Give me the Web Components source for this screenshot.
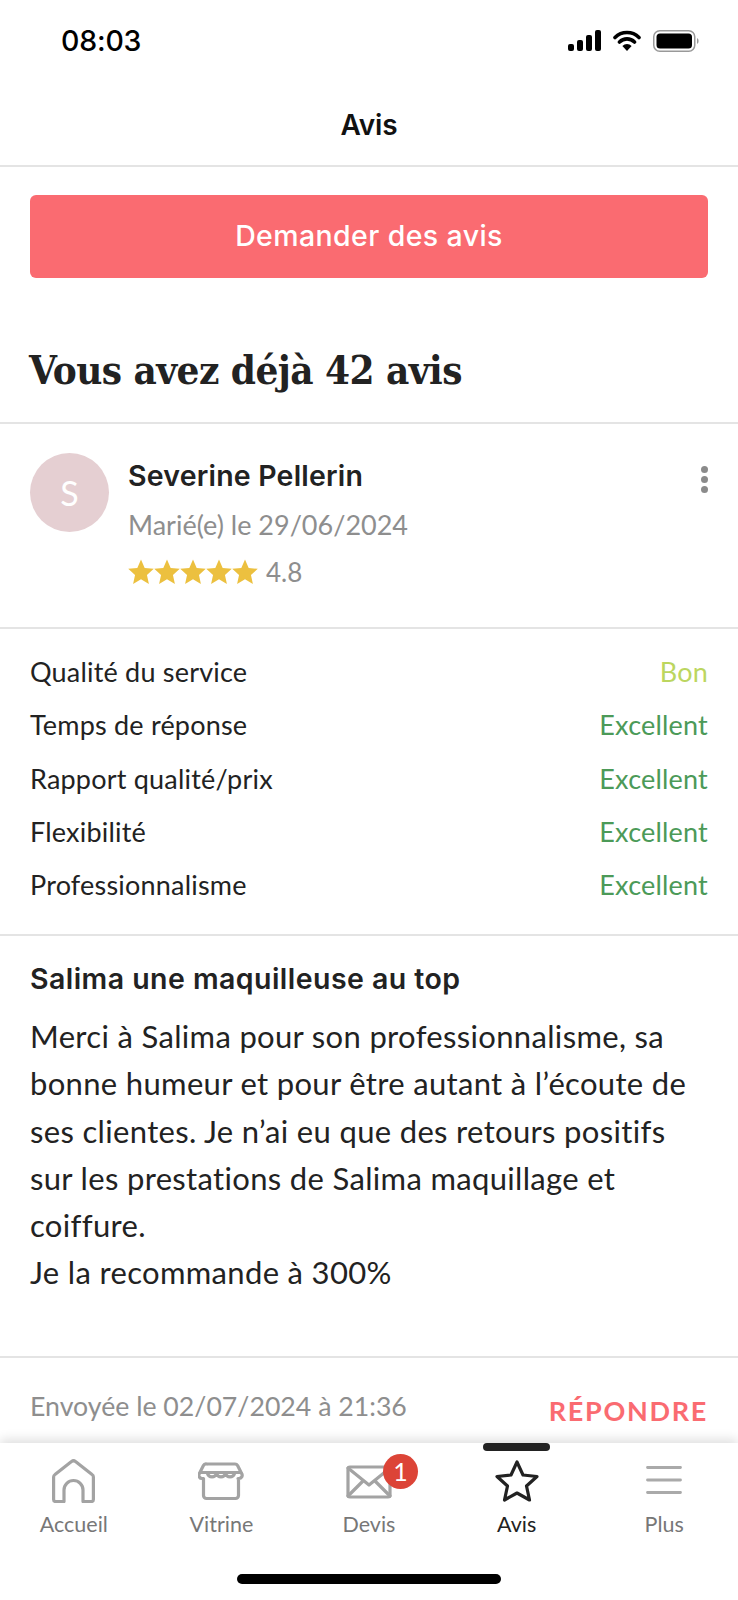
<!DOCTYPE html>
<html lang="fr">
<head>
<meta charset="utf-8">
<title>Avis</title>
<style>
    html, body { margin: 0; background: #fff; }
    body { font-family: Lato, "Open Sans", sans-serif; color: #222; }
</style>
</head>
<body>
<app-screen>
    <status-bar slot="top"></status-bar>
    <nav-title slot="top">Avis</nav-title>
    <request-button>Demander des avis</request-button>
    <count-heading>Vous avez déjà 42 avis</count-heading>
    <review-head name="Severine Pellerin" initial="S" date="Marié(e) le 29/06/2024" score="4.8"></review-head>
    <score-list>
        <score-row label="Qualité du service" value="Bon" tone="#bcd65f"></score-row>
        <score-row label="Temps de réponse" value="Excellent"></score-row>
        <score-row label="Rapport qualité/prix" value="Excellent"></score-row>
        <score-row label="Flexibilité" value="Excellent"></score-row>
        <score-row label="Professionnalisme" value="Excellent"></score-row>
    </score-list>
    <review-body heading="Salima une maquilleuse au top">Merci à Salima pour son professionnalisme, sa<br>bonne humeur et pour être autant à l’écoute de<br>ses clientes. Je n’ai eu que des retours positifs<br>sur les prestations de Salima maquillage et<br>coiffure.<br>Je la recommande à 300%</review-body>
    <review-foot date="Envoyée le 02/07/2024 à 21:36" action="RÉPONDRE"></review-foot>
    <tab-bar slot="bottom"></tab-bar>
</app-screen>

<script>
function define (name, html) {
    const template = document.createElement('template')
    template.innerHTML = html
    customElements.define(name, class extends HTMLElement {
        constructor () {
            super()
            this.attachShadow({ mode: 'open' }).appendChild(template.content.cloneNode(true))
            this.shadowRoot.querySelectorAll('[data-attr]').forEach(el => {
                el.textContent = this.getAttribute(el.dataset.attr)
            })
        }
    })
}

define('app-screen', `
    <style>
        :host { display: flex; flex-direction: column; height: 1600px; overflow: hidden; background: #fff; }
        main { flex: 1; min-height: 0; overflow: hidden; }
    </style>
    <slot name="top"></slot>
    <main><slot></slot></main>
    <slot name="bottom"></slot>
`)

define('status-bar', `
    <style>
        :host { display: flex; justify-content: space-between; align-items: center; height: 81px; padding: 0 39px 0 61px; box-sizing: border-box; }
        span { font: 500 28.500px/1 Inter, sans-serif; letter-spacing: -.2px; color: #000; margin-top: 2px; }
        div { display: flex; gap: 12px; align-items: center; }
    </style>
    <span>08:03</span>
    <div>
        <svg width="33" height="21" viewBox="0 0 33 21"><rect x="0" y="14" width="6" height="7" rx="2"/><rect x="9" y="10" width="6" height="11" rx="2"/><rect x="18" y="5" width="6" height="16" rx="2"/><rect x="27" y="0" width="6" height="21" rx="2"/></svg>
        <svg width="28" height="21" viewBox="0 0 28 21"><path d="M2 7.500a17 17 0 0 1 24 0M6.500 12a10.600 10.600 0 0 1 15 0" fill="none" stroke="#000" stroke-width="3.600" stroke-linecap="round"/><path d="M14 21l-4.600-5a6.400 6.400 0 0 1 9.200 0z"/></svg>
        <svg width="46" height="22" viewBox="0 0 46 22"><rect x=".75" y=".75" width="41" height="20.500" rx="6" fill="none" stroke="#999" stroke-width="1.500"/><rect x="3.500" y="3.500" width="35.500" height="15" rx="3.500"/><path d="M44 8v6a3 3 0 0 0 1.600-3 3 3 0 0 0-1.600-3z" fill="#999"/></svg>
    </div>
`)

define('nav-title', `
    <style>
        :host { display: block; height: 86px; text-align: center; font: 600 28px/88px Inter, sans-serif; letter-spacing: -.2px; color: #111; border-bottom: 2px solid #e4e4e4; box-sizing: border-box; }
    </style>
    <slot></slot>
`)

define('request-button', `
    <style>
        :host { display: block; padding: 28px 30px 0; }
        button { display: block; width: 100%; height: 83px; border: 0; border-radius: 6px; background: #fa6b71; color: #fff; font: 500 28.500px/81px Inter, sans-serif; letter-spacing: .4px; padding: 0 0 2px; }
    </style>
    <button><slot></slot></button>
`)

define('count-heading', `
    <style>
        :host { display: block; height: 146px; box-sizing: border-box; padding: 0 29px; border-bottom: 2px solid #e4e4e4; font: 700 40px/184px "DejaVu Serif Condensed", "DejaVu Serif", serif; letter-spacing: -.55px; color: #222; white-space: nowrap; }
    </style>
    <slot></slot>
`)

const star = '<svg width="26" height="26" viewBox="0 0 24 24"><path fill="#ecc03f" d="M12 .5l3.400 7.700 8.400.9-6.300 5.600 1.800 8.300-7.300-4.300-7.300 4.300 1.800-8.300L.2 9.100l8.400-.9z"/></svg>'

define('review-head', `
    <style>
        :host { display: flex; height: 205px; box-sizing: border-box; padding: 29px 30px 0; border-bottom: 2px solid #e4e4e4; }
        .avatar { width: 79px; height: 79px; border-radius: 50%; background: #e5cfd2; color: #fff; font-size: 34px; display: flex; align-items: center; justify-content: center; flex: none; margin-right: 19px; }
        .text { flex: 1; }
        .name { font: 600 28.500px/48px Inter, sans-serif; letter-spacing: .2px; color: #222; margin-top: -1px; }
        .date { font: 400 27px/49px Lato, sans-serif; color: #8e8e8e; }
        .rate { display: flex; align-items: center; height: 46px; font: 400 26px Lato, sans-serif; color: #8e8e8e; }
        .rate span { margin-left: 8px; }
        .stars { display: flex; }
        .dots { display: flex; flex-direction: column; gap: 3px; padding: 13px 0 0; }
        .dots i { width: 7px; height: 7px; border-radius: 50%; background: #8b8b8b; }
    </style>
    <div class="avatar" data-attr="initial"></div>
    <div class="text">
        <div class="name" data-attr="name"></div>
        <div class="date" data-attr="date"></div>
        <div class="rate"><div class="stars">${star.repeat(5)}</div><span data-attr="score"></span></div>
    </div>
    <div class="dots"><i></i><i></i><i></i></div>
`)

define('score-list', `
    <style>
        :host { display: block; height: 307px; box-sizing: border-box; padding: 16px 30px 0; border-bottom: 2px solid #e4e4e4; }
    </style>
    <slot></slot>
`)

customElements.define('score-row', class extends HTMLElement {
    constructor () {
        super()
        const tone = this.getAttribute('tone') || '#4c9a58'
        this.attachShadow({ mode: 'open' }).innerHTML = `
            <style>
                :host { display: flex; justify-content: space-between; height: 53.300px; font: 400 27px/53px Lato, sans-serif; letter-spacing: .2px; color: #222; }
                b { font-weight: 400; color: ${tone}; }
            </style>
            <span>${this.getAttribute('label')}</span><b>${this.getAttribute('value')}</b>`
    }
})

define('review-body', `
    <style>
        :host { display: block; height: 422px; box-sizing: border-box; padding: 19px 30px 0; border-bottom: 2px solid #e4e4e4; }
        h2 { margin: 0 0 10px; font: 600 28.500px/48px Inter, sans-serif; letter-spacing: .45px; color: #222; }
        p { margin: 0; font: 400 31px/47.300px Lato, sans-serif; letter-spacing: .33px; color: #222; white-space: nowrap; }
    </style>
    <h2 data-attr="heading"></h2>
    <p><slot></slot></p>
`)

define('review-foot', `
    <style>
        :host { display: flex; justify-content: space-between; padding: 0 30px; height: 90px; }
        span { font: 400 26.700px/96px Lato, sans-serif; color: #8e8e8e; }
        b { font: 700 27px/106px Lato, sans-serif; letter-spacing: 1.700px; color: #fa6b71; }
    </style>
    <span data-attr="date"></span><b data-attr="action"></b>
`)

define('tab-item', `
    <style>
        :host { flex: 1; display: flex; flex-direction: column; align-items: center; position: relative; color: #777; font: 400 21.500px/26px Lato, sans-serif; }
        :host([active]) { color: #222; }
        :host([active])::before { content: ""; position: absolute; top: 0; left: 50%; width: 67px; height: 8px; margin-left: -33.500px; background: #222; border-radius: 4px; }
        .icon { position: relative; height: 60px; margin-top: 8px; display: flex; align-items: center; justify-content: center; }
    </style>
    <div class="icon"><slot name="icon"></slot></div>
    <div class="label"><slot></slot></div>
`)

define('tab-bar', `
    <style>
        :host { display: block; height: 157px; box-sizing: border-box; background: #fff; box-shadow: 0 -4px 10px rgba(0,0,0,.12); position: relative; }
        .tabs { display: flex; height: 131px; }
        .home { display: block; width: 264px; height: 10px; background: #000; border-radius: 5px; margin: 0 auto; }
        svg { display: block; fill: none; stroke: #a3a3a3; stroke-width: 3.200; stroke-linecap: round; stroke-linejoin: round; }
        .badge { position: absolute; left: 37px; top: -11px; width: 35px; height: 35px; border-radius: 50%; background: #dc4437; color: #fff; font: 400 25px/35px Lato, sans-serif; text-align: center; }
        .mail { position: relative; margin-top: 2px; }
    </style>
    <div class="tabs">
        <tab-item>
            <svg slot="icon" width="43" height="44" viewBox="0 0 43 44"><path d="M3 15.500L19.500 2.600a3 3 0 0 1 4 0L40 15.500a3 3 0 0 1 1.400 2.500v22.500a2 2 0 0 1-2 2H31V31a9.500 9.500 0 0 0-19 0v11.500H3.600a2 2 0 0 1-2-2V18a3 3 0 0 1 1.400-2.500z"/></svg>
            Accueil
        </tab-item>
        <tab-item>
            <svg slot="icon" width="46" height="39" viewBox="0 0 46 39"><path d="M9 2h28a3 3 0 0 1 2.600 1.500l4 8a3.200 3.200 0 0 1-2.800 5h-.8M5 16.500h-.8a3.200 3.200 0 0 1-2.800-5l4-8A3 3 0 0 1 9 2M3 10.500h40M9.500 11.500a4.700 4.700 0 0 0 9 0M18.500 11.500a4.700 4.700 0 0 0 9 0M27.500 11.500a4.700 4.700 0 0 0 9 0M5.500 16.500v17a3 3 0 0 0 3 3h29a3 3 0 0 0 3-3v-17"/></svg>
            Vitrine
        </tab-item>
        <tab-item>
            <div slot="icon" class="mail">
                <svg width="46" height="34" viewBox="0 0 46 34"><rect x="2" y="2" width="42" height="30" rx="2"/><path d="M2 3l21 17 21-17M2 31l15-15M44 31L29 16"/></svg>
                <span class="badge">1</span>
            </div>
            Devis
        </tab-item>
        <tab-item active>
            <svg slot="icon" style="stroke:#222" width="44" height="42" viewBox="0 0 44 42"><path d="M22 2l6 13 14 1.500-10.500 9.500 3 14L22 33l-12.500 7 3-14L2 16.500 16 15z"/></svg>
            Avis
        </tab-item>
        <tab-item>
            <svg slot="icon" style="stroke-width:2.800;stroke:#aaa;margin-top:-3px" width="36" height="28" viewBox="0 0 36 28"><path d="M1.500 1.500h33M1.500 14h33M1.500 26.500h33"/></svg>
            Plus
        </tab-item>
    </div>
    <span class="home"></span>
`)
</script>
</body>
</html>
